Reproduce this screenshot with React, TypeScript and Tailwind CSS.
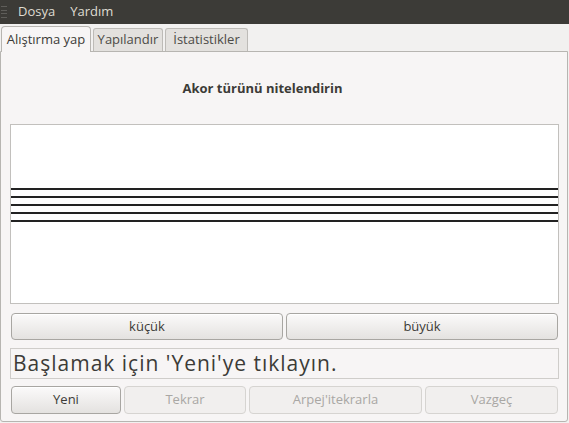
const btn =
  'flex items-center justify-center rounded-[4px] border border-[#a8a6a2] bg-gradient-to-b from-[#fbfafa] to-[#e4e2e0] text-[13px] text-[#3c3b37] shadow-[inset_0_1px_0_#ffffff]';
const btnOff =
  'flex items-center justify-center rounded-[4px] border border-[#d6d4d1] bg-[#f1efee] text-[13px] text-[#a9a7a4]';

export default function App() {
  return (
    <div className="w-[569px] h-[423px] flex flex-col bg-[#f2f1f0] font-['Open_Sans',sans-serif] overflow-hidden">
      {/* menu bar */}
      <div className="h-[24px] flex items-center bg-[#3c3b37] text-[13px] text-[#dfdbd2]">
        <div className="w-[6px] h-[14px] ml-[1px] flex flex-col justify-between py-[1px]">
          <div className="h-[1px] bg-[#5f5e5a]" />
          <div className="h-[1px] bg-[#5f5e5a]" />
          <div className="h-[1px] bg-[#5f5e5a]" />
          <div className="h-[1px] bg-[#5f5e5a]" />
        </div>
        <span className="ml-[11px]">Dosya</span>
        <span className="ml-[15px]">Yardım</span>
      </div>

      {/* tabs */}
      <div className="h-[27px] flex items-end pl-[1px] gap-[2px] text-[13px]">
        <div className="h-[26px] w-[90px] flex items-center justify-center rounded-t-[4px] border border-b-0 border-[#b7b5b1] bg-[#f7f5f5] text-[#3c3b37] -mb-[1px] z-10">
          Alıştırma yap
        </div>
        <div className="h-[23px] w-[70px] flex items-center justify-center rounded-t-[3px] border border-b-0 border-[#bdbbb7] bg-[#e3e1de] text-[#4c4b47]">
          Yapılandır
        </div>
        <div className="h-[23px] w-[83px] flex items-center justify-center rounded-t-[3px] border border-b-0 border-[#bdbbb7] bg-[#e3e1de] text-[#4c4b47]">
          İstatistikler
        </div>
      </div>

      {/* page */}
      <div className="flex-1 mr-[1px] mb-[1px] flex flex-col border border-[#b7b5b1] rounded-b-[3px] bg-[#f7f5f5] pl-[9px] pr-[8px]">
        <div className="h-[72px] flex items-center justify-center pt-[2px] pr-[44px] text-[13px] font-bold text-[#3c3b37]">
          Akor türünü nitelendirin
        </div>
        <div className="h-[180px] border border-[#c2c0bd] bg-white flex flex-col gap-[6px] pt-[63px]">
          <div className="h-[2px] bg-[#222]" />
          <div className="h-[2px] bg-[#222]" />
          <div className="h-[2px] bg-[#222]" />
          <div className="h-[2px] bg-[#222]" />
          <div className="h-[2px] bg-[#222]" />
        </div>
        <div className="mt-[9px] h-[27px] flex gap-[3px] px-[1px]">
          <div className={`${btn} flex-1`}>küçük</div>
          <div className={`${btn} flex-1`}>büyük</div>
        </div>
        <div className="mt-[8px] h-[31px] flex items-center border border-[#cfcdca] px-[2px] text-[21px] tracking-[1px] text-[#3c3b37]">
          Başlamak için 'Yeni'ye tıklayın.
        </div>
        <div className="mt-[7px] h-[28px] flex gap-[3px] px-[1px]">
          <div className={`${btn} w-[110px] border-[#8c8a86]`}>Yeni</div>
          <div className={`${btnOff} w-[122px]`}>Tekrar</div>
          <div className={`${btnOff} w-[173px]`}>Arpej'itekrarla</div>
          <div className={`${btnOff} flex-1`}>Vazgeç</div>
        </div>
      </div>
    </div>
  );
}
